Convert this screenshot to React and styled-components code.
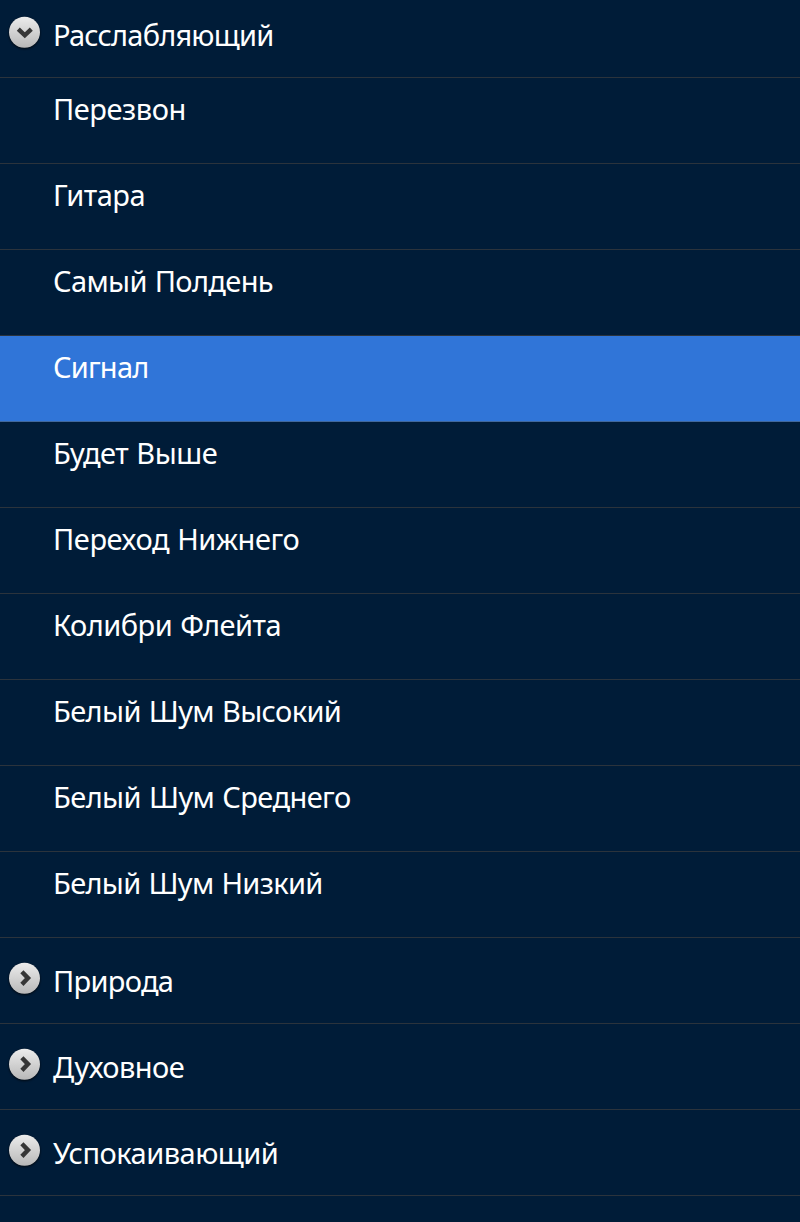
import React from "react";
import styled, { createGlobalStyle } from "styled-components";

const GlobalStyle = createGlobalStyle`
  body {
    margin: 0;
    background-color: #001c38;
    font-family: "Noto Sans", "Open Sans", sans-serif;
  }
`;

const List = styled.ul`
  list-style: none;
  margin: 0;
  padding: 0;
  height: 1222px;
  overflow: hidden;
  color: #ffffff;
`;

const Row = styled.li`
  display: flex;
  box-sizing: border-box;
  height: ${(props) => props.$height || "86px"};
  padding: ${(props) => props.$pad || "0"};
  border-bottom: 1px solid ${(props) => (props.$selected ? "#41689c" : "#2b333c")};
  background-color: ${(props) => (props.$selected ? "#3075d8" : "")};
  font-size: 29px;
  line-height: 40px;
  white-space: nowrap;
  cursor: pointer;
`;

const Icon = styled.svg`
  flex-shrink: 0;
  width: 40px;
  height: 40px;
  margin: -3px 8px 0 5px;
  filter: drop-shadow(0 1.5px 1px rgba(0, 0, 0, 0.75));
`;

const Label = styled.span`
  letter-spacing: ${(props) => props.$spacing || "0"};
  word-spacing: 1px;
`;

const groups = [
  {
    name: "Расслабляющий",
    spacing: "-0.79px",
    open: true,
    items: [
      { name: "Перезвон", spacing: "-0.45px" },
      { name: "Гитара", spacing: "-0.55px" },
      { name: "Самый Полдень", spacing: "-0.63px" },
      { name: "Сигнал", spacing: "-0.8px", selected: true },
      { name: "Будет Выше", spacing: "-0.47px" },
      { name: "Переход Нижнего", spacing: "-0.42px" },
      { name: "Колибри Флейта", spacing: "-0.5px" },
      { name: "Белый Шум Высокий", spacing: "-0.6px" },
      { name: "Белый Шум Среднего", spacing: "-0.57px" },
      { name: "Белый Шум Низкий", spacing: "-0.65px" },
    ],
  },
  { name: "Природа", spacing: "-0.7px" },
  { name: "Духовное", spacing: "-0.55px" },
  { name: "Успокаивающий", spacing: "-0.5px" },
];

const Indicator = ({ open }) => (
  <Icon viewBox="0 0 40 40">
    <defs>
      <linearGradient id="disc" x1="0" y1="0" x2="0" y2="1">
        <stop offset="0" stopColor="#ececec" />
        <stop offset="1" stopColor="#b8b8b8" />
      </linearGradient>
    </defs>
    <circle cx="19.5" cy="20.2" r="15.5" fill="url(#disc)" />
    <path
      d={
        open
          ? "M13.3 17.2 L19.8 23.3 L26.3 17.2"
          : "M16.9 13.8 L23 20.1 L16.9 26.4"
      }
      fill="none"
      stroke="#363636"
      strokeWidth="4.4"
    />
  </Icon>
);

export default function App() {
  return (
    <>
      <GlobalStyle />
      <List>
        {groups.map((group) => (
          <React.Fragment key={group.name}>
            <Row
              $height={group.open ? "78px" : "86px"}
              $pad={group.open ? "15px 0 0" : "23px 0 0"}
            >
              <Indicator open={group.open} />
              <Label $spacing={group.spacing}>{group.name}</Label>
            </Row>
            {group.items?.map((item) => (
              <Row
                key={item.name}
                $pad="11px 0 0 53px"
                $selected={item.selected}
              >
                <Label $spacing={item.spacing}>{item.name}</Label>
              </Row>
            ))}
          </React.Fragment>
        ))}
      </List>
    </>
  );
}
